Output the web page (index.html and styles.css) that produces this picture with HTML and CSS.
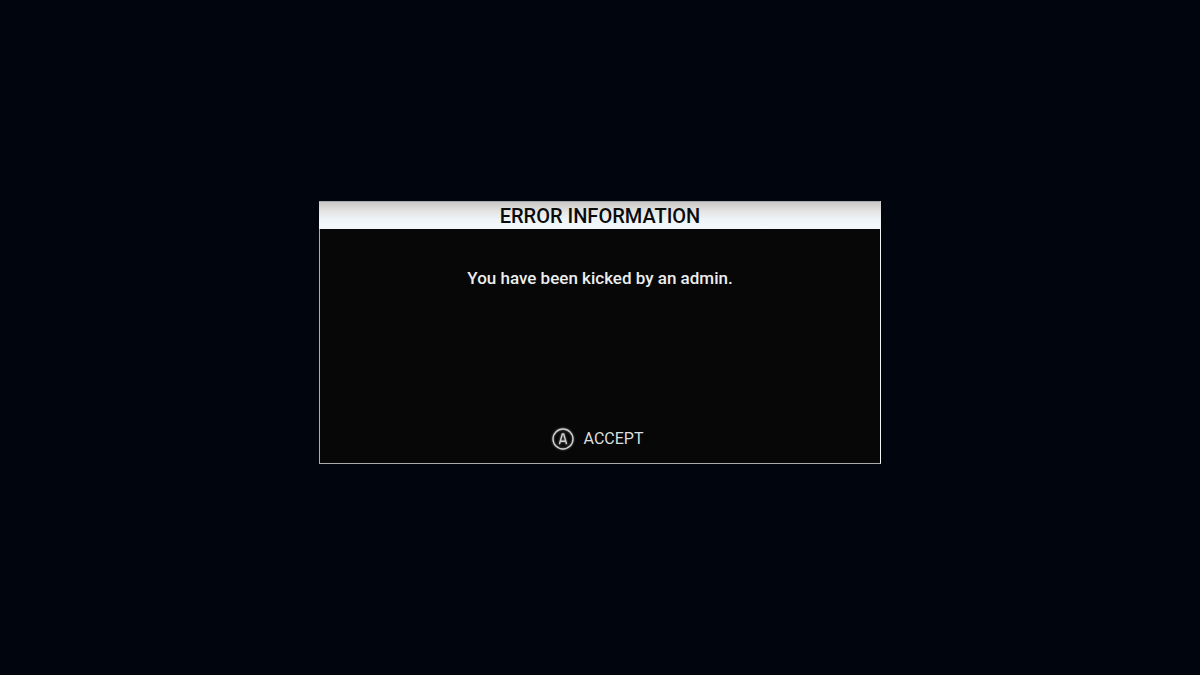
FILE: index.html
```html
<!DOCTYPE html>
<html lang="en">

<head>
    <meta charset="UTF-8">
    <meta name="viewport" content="width=device-width, initial-scale=1.0">
    <title>Error Information</title>
    <link rel="stylesheet" href="styles.css">
</head>

<body>
    <div class="dialog" role="alertdialog" aria-labelledby="title" aria-describedby="message">
        <h1 class="title" id="title">ERROR INFORMATION</h1>
        <p class="message" id="message">You have been kicked by an admin.</p>
        <div class="actions">
            <button class="accept" type="button">
                <svg class="pad-icon" viewBox="0 0 24 24" aria-hidden="true">
                    <circle cx="12" cy="12" r="10" />
                    <path d="M8.4 17.2 L11.3 7 H12.7 L15.6 17.2 M9.4 14.2 H14.6" />
                </svg>
                ACCEPT
            </button>
        </div>
    </div>
</body>

</html>
```

FILE: styles.css
```css
* {
    margin: 0;
    padding: 0;
    box-sizing: border-box;
}

body {
    display: flex;
    justify-content: center;
    align-items: center;
    min-height: 100vh;
    padding: 0 16px 10px;
    background-color: #01050d;
    font-family: Roboto, "Liberation Sans", sans-serif;
}

.dialog {
    display: flex;
    flex-direction: column;
    width: 100%;
    max-width: 562px;
    border: 1px solid #a9abac;
    border-right-color: #f2f4f5;
    background-color: #070707;
    color: #eceeee;
}

.title {
    margin: 0 -1px;
    padding-top: 2px;
    background: linear-gradient(#cbc9c8, #e4e4e3 35%, #eff4f8 65%, #f3f8fb);
    color: #0b0b0b;
    font-size: 20px;
    font-weight: 500;
    line-height: 25px;
    text-align: center;
}

.message {
    min-height: 181px;
    padding: 39px 20px;
    font-size: 17px;
    font-weight: 500;
    line-height: 20px;
    text-align: center;
}

.actions {
    display: flex;
    justify-content: center;
    padding: 17px 6px 12px 0;
}

.accept {
    display: flex;
    align-items: center;
    gap: 9px;
    border: none;
    background: none;
    color: #dcdede;
    font-family: inherit;
    font-size: 16px;
    line-height: 24px;
    cursor: pointer;
}

.accept:hover {
    color: white;
}

.pad-icon {
    width: 24px;
    height: 24px;
    fill: none;
    stroke: #d0d0d0;
    stroke-width: 1.4;
    filter: drop-shadow(0 0 1px #777777);
}
```
